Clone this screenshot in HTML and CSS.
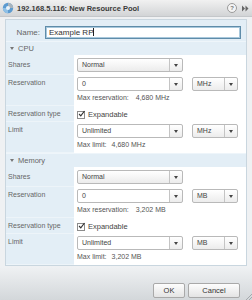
FILE: index.html
```html
<!DOCTYPE html>
<html>

<head>
  <meta charset="utf-8">
  <meta name="viewport" content="width=device-width">
  <title>New Resource Pool</title>
  <link rel="stylesheet" href="styles.css">
</head>

<body>
  <div class="dialog">
    <!-- title bar -->
    <div class="titlebar">
      <svg class="app-icon" width="12" height="12" viewBox="0 0 12 12">
        <circle cx="6" cy="6" r="5.2" fill="#5d9bd0"/>
        <path d="M6 0.8 A5.2 5.2 0 0 1 11.2 6 L6 6 Z" fill="#a9b4bd"/>
        <path d="M0.8 6 A5.2 5.2 0 0 0 6 11.2 L6 6 Z" fill="#8fc0e6"/>
        <circle cx="6" cy="6" r="2" fill="#e9f2f9"/>
      </svg>
      <span class="title">192.168.5.116: New Resource Pool</span>
      <span class="help">?</span>
      <svg class="expand" width="7" height="7" viewBox="0 0 7 7">
        <path d="M0 0.5 L3 3.5 L0 6.5 Z M3.5 0.5 L6.5 3.5 L3.5 6.5 Z" fill="#666"/>
      </svg>
    </div>

    <div class="body">
      <div class="panel">
        <div class="name-row">
          <span class="name-label">Name:</span>
          <div class="name-input">Example RP<span class="caret"></span></div>
        </div>

        <div class="section"><i class="tri"></i>CPU</div>

        <div class="row">
          <div class="label">Shares</div>
          <div class="field">
            <div class="select shares"><span class="value">Normal</span><span class="btn"><i class="arrow"></i></span></div>
          </div>
        </div>
        <div class="row tall">
          <div class="label">Reservation</div>
          <div class="field">
            <div class="line">
              <div class="select combo"><span class="value">0</span><span class="btn"><i class="arrow"></i></span></div>
              <div class="select unit"><span class="value">MHz</span><span class="btn"><i class="arrow"></i></span></div>
            </div>
            <div class="hint">Max reservation:<span class="amount">4,680 MHz</span></div>
          </div>
        </div>
        <div class="row check-row">
          <div class="label">Reservation type</div>
          <div class="field">
            <label class="check"><span class="box"><svg width="8" height="8" viewBox="0 0 8 8"><path d="M1.2 4 L3.2 6.2 L7.4 0.6" fill="none" stroke="#333" stroke-width="1.3"/></svg></span>Expandable</label>
          </div>
        </div>
        <div class="row tall">
          <div class="label">Limit</div>
          <div class="field">
            <div class="line">
              <div class="select combo"><span class="value">Unlimited</span><span class="btn"><i class="arrow"></i></span></div>
              <div class="select unit"><span class="value">MHz</span><span class="btn"><i class="arrow"></i></span></div>
            </div>
            <div class="hint">Max limit:<span class="amount short">4,680 MHz</span></div>
          </div>
        </div>

        <div class="section"><i class="tri"></i>Memory</div>

        <div class="row">
          <div class="label">Shares</div>
          <div class="field">
            <div class="select shares"><span class="value">Normal</span><span class="btn"><i class="arrow"></i></span></div>
          </div>
        </div>
        <div class="row tall">
          <div class="label">Reservation</div>
          <div class="field">
            <div class="line">
              <div class="select combo"><span class="value">0</span><span class="btn"><i class="arrow"></i></span></div>
              <div class="select unit"><span class="value">MB</span><span class="btn"><i class="arrow"></i></span></div>
            </div>
            <div class="hint">Max reservation:<span class="amount">3,202 MB</span></div>
          </div>
        </div>
        <div class="row check-row">
          <div class="label">Reservation type</div>
          <div class="field">
            <label class="check"><span class="box"><svg width="8" height="8" viewBox="0 0 8 8"><path d="M1.2 4 L3.2 6.2 L7.4 0.6" fill="none" stroke="#333" stroke-width="1.3"/></svg></span>Expandable</label>
          </div>
        </div>
        <div class="row tall">
          <div class="label">Limit</div>
          <div class="field">
            <div class="line">
              <div class="select combo"><span class="value">Unlimited</span><span class="btn"><i class="arrow"></i></span></div>
              <div class="select unit"><span class="value">MB</span><span class="btn"><i class="arrow"></i></span></div>
            </div>
            <div class="hint">Max limit:<span class="amount short">3,202 MB</span></div>
          </div>
        </div>
      </div>
    </div>

    <!-- buttons -->
    <div class="footer">
      <button class="btn-ok" type="button">OK</button>
      <button class="btn-cancel" type="button">Cancel</button>
      <svg class="grip" width="7" height="7" viewBox="0 0 7 7">
        <path d="M7 1 L1 7 M7 4 L4 7" stroke="#a5a9ad" stroke-width="1"/>
      </svg>
    </div>
  </div>
</body>

</html>
```

FILE: styles.css
```css
body {
  margin: 0;
  font-family: "Liberation Sans", Arial, sans-serif;
  font-size: 7px;
  color: #444;
}

.dialog {
  width: 252px;
  height: 300px;
  background: #eff1f3;
  display: flex;
  flex-direction: column;
}

/* Title bar */
.titlebar {
  height: 17px;
  display: flex;
  align-items: center;
  padding: 0 3px 0 2px;
  background: linear-gradient(#f1f1f1, #d2d4d6);
  border-bottom: 1px solid #c4c7ca;
  box-sizing: border-box;
}

.app-icon {
  margin-right: 3px;
}

.title {
  flex: 1;
  font-size: 7.5px;
  font-weight: bold;
  color: #3a3a3a;
}

.help {
  width: 8px;
  height: 8px;
  border: 1px solid #9a9a9a;
  border-radius: 50%;
  background: #f4f4f4;
  font-size: 6px;
  font-weight: bold;
  color: #777;
  text-align: center;
  line-height: 8px;
  margin-right: 5px;
}

/* Main area */
.body {
  flex: 1;
  padding: 2px 5px 0;
}

.panel {
  border: 1px solid #c9d6df;
  background: #fff;
}

.name-row {
  height: 21px;
  display: flex;
  align-items: flex-start;
  padding-top: 6px;
  box-sizing: border-box;
  background: #e3eef6;
}

.name-label {
  width: 34px;
  text-align: right;
  margin-right: 5px;
  font-size: 8px;
  line-height: 13px;
  color: #666;
}

.name-input {
  width: 196px;
  height: 13px;
  box-sizing: border-box;
  border: 1px solid #5f8ca9;
  box-shadow: inset 0 0 0 1px #a8c8dc;
  background: #fff;
  padding-left: 3px;
  font-size: 8px;
  line-height: 11px;
  color: #333;
}

.caret {
  display: inline-block;
  width: 1px;
  height: 8px;
  background: #222;
  vertical-align: -1px;
}

.section {
  height: 14px;
  line-height: 14px;
  padding-left: 4px;
  background: #e3eef6;
  font-size: 7.5px;
  color: #666;
  border-top: 1px solid #eef5fa;
  box-sizing: border-box;
}

.tri {
  display: inline-block;
  width: 0;
  height: 0;
  border-left: 2px solid transparent;
  border-right: 2px solid transparent;
  border-top: 3px solid #777;
  margin-right: 4px;
  vertical-align: 1px;
}

/* Property rows */
.row {
  display: grid;
  grid-template-columns: 68px 1fr;
  height: 20px;
}

.row.tall {
  height: 31px;
}

.row.check-row {
  height: 16px;
}

.label {
  background: #e3eef6;
  border-bottom: 1px solid #edf4f9;
  padding: 0 0 0 2px;
  color: #666;
  display: flex;
  align-items: center;
}

.row.tall .label {
  align-items: flex-start;
  padding-top: 4px;
  box-sizing: border-box;
}

.field {
  padding: 3px 0 0 3px;
}

.row.tall .field {
  padding-top: 2px;
}

.row.check-row .field {
  padding-top: 4px;
}

.line {
  display: flex;
  gap: 9px;
}

.select {
  display: flex;
  height: 14px;
  box-sizing: border-box;
  border: 1px solid #b9b9b9;
  border-radius: 2px;
  background: linear-gradient(#fff, #ececec);
}

.select .value {
  flex: 1;
  padding-left: 4px;
  line-height: 12px;
  color: #444;
}

.select .btn {
  width: 12px;
  border-left: 1px solid #c4c4c4;
  display: flex;
  align-items: center;
  justify-content: center;
}

.arrow {
  width: 0;
  height: 0;
  border-left: 2px solid transparent;
  border-right: 2px solid transparent;
  border-top: 3px solid #444;
}

.select.shares,
.select.combo {
  width: 106px;
}

.select.combo .value {
  background: #fff;
  border-radius: 2px 0 0 2px;
}

.select.unit {
  width: 46px;
}

.hint {
  height: 13px;
  line-height: 13px;
  color: #555;
}

.amount {
  margin-left: 7px;
}

.amount.short {
  margin-left: 5px;
}

.check {
  display: flex;
  align-items: center;
  color: #444;
  font-size: 7.5px;
}

.box {
  width: 8px;
  height: 8px;
  box-sizing: border-box;
  border: 1px solid #8c8c8c;
  background: #fff;
  margin-right: 3px;
  display: flex;
  align-items: flex-end;
  justify-content: flex-end;
  overflow: visible;
}

.box svg {
  margin: 0 -1px 0 0;
}

/* Footer */
.footer {
  height: 33px;
  box-sizing: border-box;
  padding: 16px 12px 0 0;
  display: flex;
  justify-content: flex-end;
  gap: 3px;
  background: linear-gradient(#eff1f3, #d3d7da);
  position: relative;
}

.footer button {
  height: 15px;
  padding: 0;
  font-family: "Liberation Sans", Arial, sans-serif;
  font-size: 7.5px;
  color: #333;
  border: 1px solid #a9a9a9;
  border-radius: 2px;
  background: linear-gradient(#fdfdfd, #e4e4e4);
}

.btn-ok {
  width: 32px;
}

.btn-cancel {
  width: 52px;
}

.grip {
  position: absolute;
  right: 0;
  bottom: 0;
}
```
